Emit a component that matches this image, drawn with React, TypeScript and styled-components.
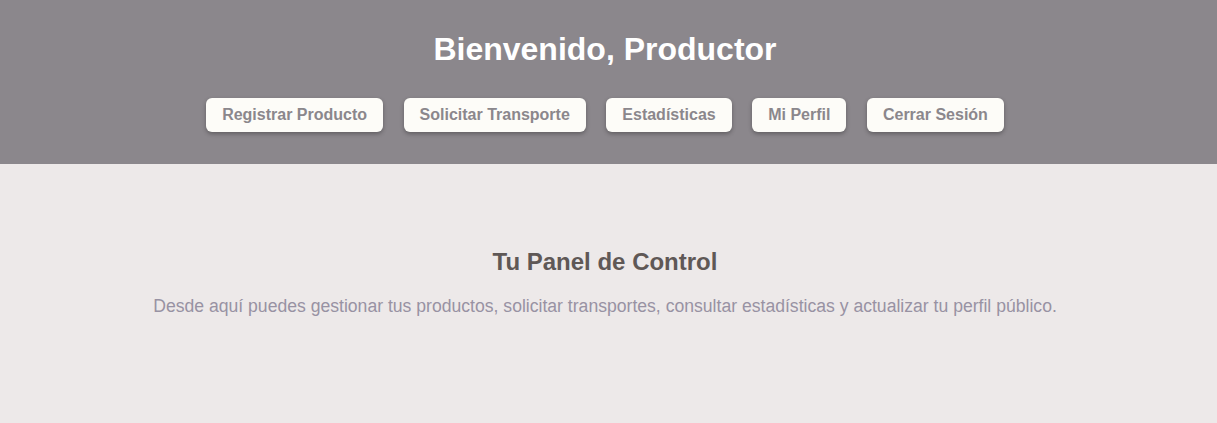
import React from "react";
import styled, { createGlobalStyle } from "styled-components";

const Global = createGlobalStyle`
  html, body { margin: 0; padding: 0; }
  body {
    font-family: "Liberation Sans", Arial, sans-serif;
    background: #ede9e9;
  }
`;

const Header = styled.header`
  background: #8b878c;
  padding: 31px 27px 32px 20px;
  display: flex;
  flex-direction: column;
  align-items: center;
`;

const Title = styled.h1`
  margin: 0 0 30px;
  font-size: 32px;
  line-height: 37px;
  font-weight: bold;
  color: #ffffff;
`;

const Nav = styled.nav`
  display: flex;
  justify-content: center;
  gap: 20.5px;
`;

const NavButton = styled.button`
  font-family: "Liberation Sans", Arial, sans-serif;
  font-size: 16px;
  line-height: 18px;
  font-weight: bold;
  color: #8b878c;
  background: #fdfcf8;
  border: none;
  border-radius: 6px;
  padding: 8px 16px;
  box-shadow: 0 2px 4px rgba(0, 0, 0, 0.3);
  cursor: pointer;
`;

const Main = styled.main`
  display: flex;
  flex-direction: column;
  align-items: center;
  padding: 84px 27px 0 20px;
  min-height: 259px;
  box-sizing: border-box;
`;

const SectionTitle = styled.h2`
  margin: 0 0 20px;
  font-size: 24px;
  line-height: 28px;
  font-weight: bold;
  color: #5f5856;
`;

const Description = styled.p`
  margin: 0;
  font-size: 17.6px;
  line-height: 21px;
  color: #9892a3;
`;

export default function App() {
  const items = [
    "Registrar Producto",
    "Solicitar Transporte",
    "Estadísticas",
    "Mi Perfil",
    "Cerrar Sesión",
  ];
  return (
    <>
      <Global />
      <Header>
        <Title>Bienvenido, Productor</Title>
        <Nav>
          {items.map((t) => (
            <NavButton key={t}>{t}</NavButton>
          ))}
        </Nav>
      </Header>
      <Main>
        <SectionTitle>Tu Panel de Control</SectionTitle>
        <Description>
          Desde aquí puedes gestionar tus productos, solicitar transportes, consultar estadísticas y actualizar tu perfil público.
        </Description>
      </Main>
    </>
  );
}
